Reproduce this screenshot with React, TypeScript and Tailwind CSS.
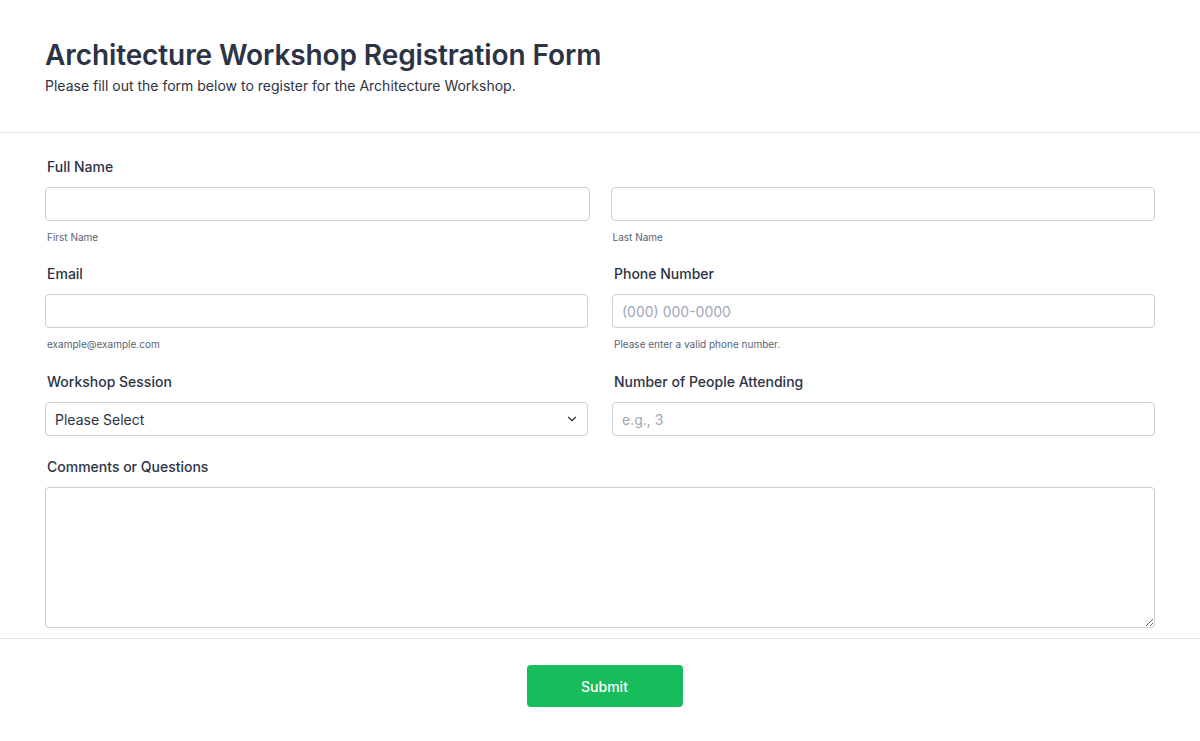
import { ChevronDown } from 'lucide-react'

const font = { fontFamily: 'Inter, "Noto Sans", sans-serif' }

function Label({ children }: { children: React.ReactNode }) {
  return <label className="block text-[14px] font-medium text-[#2c3345] mb-[12px] pl-[2px] leading-[17px]">{children}</label>
}

function Sub({ children }: { children: React.ReactNode }) {
  return <div className="mt-[9px] pl-[2px] text-[10px] text-[#5a6275] leading-[14px]">{children}</div>
}

const inputCls =
  'block w-full h-[34px] rounded-[4px] border border-[#c8ceda] bg-white px-[9px] text-[14px] text-[#2c3345] placeholder:text-[#a0a8b8] outline-none'

export default function App() {
  return (
    <div className="min-h-screen bg-white" style={font}>
      {/* Header */}
      <div className="px-[45px] pt-[38px] pb-[37px] border-b border-[#e6e8ef]">
        <h1 className="text-[28px] font-semibold text-[#2c3345] leading-[34px] tracking-[-0.1px]">
          Architecture Workshop Registration Form
        </h1>
        <p className="mt-[5px] text-[14px] text-[#2c3345] leading-[18px]">
          Please fill out the form below to register for the Architecture Workshop.
        </p>
      </div>

      {/* Fields */}
      <div className="px-[45px] pt-[25px] pb-[10px]">
        <Label>Full Name</Label>
        <div className="grid grid-cols-2 gap-x-[21px]">
          <div>
            <input className={inputCls} />
            <Sub>First Name</Sub>
          </div>
          <div>
            <input className={inputCls} />
            <Sub>Last Name</Sub>
          </div>
        </div>

        <div className="grid grid-cols-2 gap-x-[24px] mt-[21px]">
          <div>
            <Label>Email</Label>
            <input className={inputCls} />
            <Sub>example@example.com</Sub>
          </div>
          <div>
            <Label>Phone Number</Label>
            <input className={inputCls} placeholder="(000) 000-0000" />
            <Sub>Please enter a valid phone number.</Sub>
          </div>
        </div>

        <div className="grid grid-cols-2 gap-x-[24px] mt-[22px]">
          <div>
            <Label>Workshop Session</Label>
            <div className="relative">
              <select className={inputCls + ' appearance-none text-[#2c3345]'} defaultValue="">
                <option value="">Please Select</option>
                <option>Morning Session</option>
                <option>Afternoon Session</option>
              </select>
              <ChevronDown className="absolute right-[9px] top-1/2 -translate-y-1/2 w-[14px] h-[14px] text-[#2c3345] pointer-events-none" strokeWidth={2} />
            </div>
          </div>
          <div>
            <Label>Number of People Attending</Label>
            <input className={inputCls} placeholder="e.g., 3" />
          </div>
        </div>

        <div className="mt-[22px]">
          <Label>Comments or Questions</Label>
          <textarea className="block w-full h-[141px] rounded-[4px] border border-[#c8ceda] bg-white px-[9px] py-[6px] text-[14px] outline-none" />
        </div>
      </div>

      {/* Footer */}
      <div className="border-t border-[#e6e8ef] flex justify-center pl-[9px] pt-[26px] pb-[34px]">
        <button className="w-[156px] h-[42px] rounded-[4px] bg-[#18bd5b] text-white text-[14px] font-medium">
          Submit
        </button>
      </div>
    </div>
  )
}
